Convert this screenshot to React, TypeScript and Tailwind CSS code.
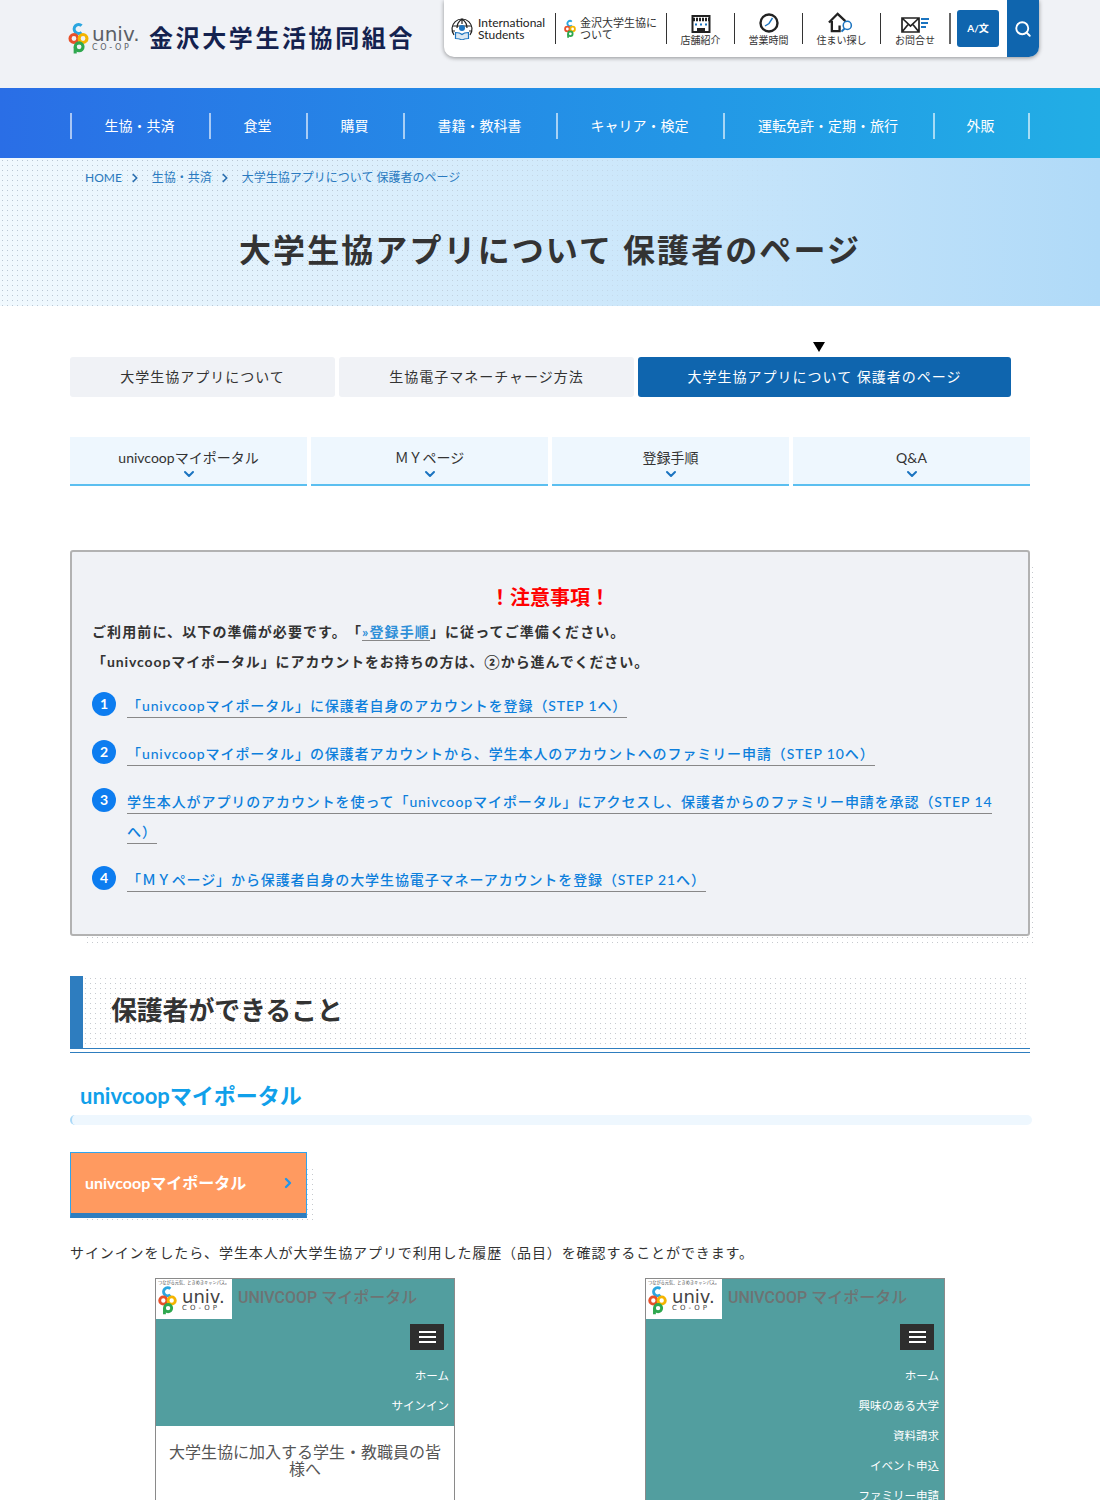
import { ChevronDown, ChevronRight, Search } from 'lucide-react';

const NAV = [
  { label: '生協・共済', w: 'w-[139px]' },
  { label: '食堂', w: 'w-[97px]' },
  { label: '購買', w: 'w-[97px]' },
  { label: '書籍・教科書', w: 'w-[153px]' },
  { label: 'キャリア・検定', w: 'w-[167px]' },
  { label: '運転免許・定期・旅行', w: 'w-[210px]' },
  { label: '外販', w: 'w-[97px]' },
];

const SUB_TABS = ['univcoopマイポータル', 'ＭＹページ', '登録手順', 'Q&A'];

const STEPS = [
  '「univcoopマイポータル」に保護者自身のアカウントを登録（STEP 1へ）',
  '「univcoopマイポータル」の保護者アカウントから、学生本人のアカウントへのファミリー申請（STEP 10へ）',
  '学生本人がアプリのアカウントを使って「univcoopマイポータル」にアクセスし、保護者からのファミリー申請を承認（STEP 14へ）',
  '「ＭＹページ」から保護者自身の大学生協電子マネーアカウントを登録（STEP 21へ）',
];

const DOTS = 'bg-[radial-gradient(#c6cacf_0.7px,transparent_0.9px)] bg-[length:5px_5px]';

function CoopMark({ className }: { className: string }) {
  return (
    <svg viewBox="0 0 20 30" fill="none" strokeWidth="3" className={className}>
      <path d="M13 2.6A4.3 4.3 0 1 0 13 9" stroke="#2aa6e0" />
      <circle cx="5.6" cy="15" r="3.8" stroke="#e8502a" />
      <circle cx="14.4" cy="15" r="3.8" stroke="#f4b400" />
      <circle cx="10.6" cy="23" r="3.8" stroke="#2fa84f" />
      <path d="M6.8 23v6.5" stroke="#2fa84f" />
    </svg>
  );
}

function Divider() {
  return <span className="h-[31px] w-px bg-[#333] shrink-0" />;
}

function UtilItem({ icon, label, w }: { icon: React.ReactNode; label: string; w: string }) {
  return (
    <div className={`${w} pb-[2px] flex flex-col items-center text-[10px] leading-none text-[#333]`}>
      <div className="h-[22px] flex items-end justify-center">{icon}</div>
      <span className="mt-[2px] whitespace-nowrap">{label}</span>
    </div>
  );
}

function PhoneShot({ menu, body }: { menu: string[]; body?: boolean }) {
  return (
    <div className="w-[300px] mx-auto h-[222px] border border-b-0 border-[#8a8a8a] overflow-hidden">
      <div className={`bg-[#529e9f] ${body ? 'h-[147px]' : 'h-[240px]'}`}>
        <div className="flex items-start">
          <div className="w-[76px] h-[40px] bg-white shrink-0">
            <p className="text-[4.2px] leading-[5px] pt-[1px] pl-[2px] text-[#444] whitespace-nowrap">つながる元気、ときめきキャンパス。</p>
            <div className="flex items-center pl-[2px]">
              <CoopMark className="w-[19px] h-[31px]" />
              <div className="ml-[5px] text-[#444] font-['DejaVu_Sans',sans-serif]">
                <p className="text-[18px] leading-[15px]">univ.</p>
                <p className="text-[7px] tracking-[3px] leading-[9px]">CO-OP</p>
              </div>
            </div>
          </div>
          <p className="ml-[6px] mt-[9px] text-[16px] leading-[20px] font-medium text-[#6e7373] whitespace-nowrap font-['Roboto','Noto_Sans_CJK_JP',sans-serif]">UNIVCOOP マイポータル</p>
        </div>
        <div className="flex justify-end pr-[10px] mt-[5px]">
          <div className="w-[34px] h-[26px] bg-[#2e2e2e] flex flex-col justify-center items-center gap-[3px]">
            <span className="w-[17px] h-[2px] bg-white" />
            <span className="w-[17px] h-[2px] bg-white" />
            <span className="w-[17px] h-[2px] bg-white" />
          </div>
        </div>
        <div className="mt-[11px] pr-[5px] text-right text-[11.5px] leading-[30px] text-white">
          {menu.map(m => <p key={m}>{m}</p>)}
        </div>
      </div>
      {body && (
        <p className="bg-white px-[10px] pt-[17px] text-center text-[16px] leading-[17px] text-[#555]">大学生協に加入する学生・教職員の皆様へ</p>
      )}
    </div>
  );
}

export default function App() {
  return (
    <div className="w-[1100px] h-[1500px] overflow-hidden bg-white text-[#333] [text-spacing-trim:space-all] font-['Lato','Noto_Sans_CJK_JP',sans-serif]">
      {/* Header */}
      <header className="h-[88px] bg-[#f0f2f6] flex items-start pl-[68px]">
        <div className="flex items-center mt-[23px]">
          <CoopMark className="w-[21px] h-[31px]" />
          <div className="ml-[3px] w-[50px] text-[#5b5f66] font-['DejaVu_Sans',sans-serif]">
            <p className="text-[20px] leading-[17px]">univ.</p>
            <p className="text-[8px] leading-[9px] tracking-[2.6px]">CO-OP</p>
          </div>
          <h1 className="ml-[7px] -mt-[2px] text-[24px] leading-[30px] font-bold tracking-[2.6px] text-[#14224f] whitespace-nowrap">金沢大学生活協同組合</h1>
        </div>
        {/* Utility panel */}
        <div className="ml-[29px] w-[595px] h-[57px] bg-white rounded-b-[10px] shadow-[0_1px_4px_rgba(0,0,0,0.4)] flex items-center pl-[7px] overflow-hidden">
          <svg viewBox="0 0 22 22" className="w-[22px] h-[22px] shrink-0" fill="none" stroke="#222" strokeWidth="1.2">
            <path d="M3 17A10 10 0 1 1 19 17" />
            <path d="M1.5 8h19M1 13h3M18 13h3M11 1c-3 2-5 5-5 9M11 1c3 2 5 5 5 9M11 1v5" />
            <circle cx="11" cy="10" r="3" fill="#1b74c0" stroke="none" />
            <path d="M4.500 14.500c2 0 5 .5 6.500 2 1.500-1.500 4.500-2 6.500-2v6c-2 0-5 .5-6.500 1.500-1.500-1-4.500-1.500-6.500-1.500z" fill="#dbe8f3" stroke="#1b74c0" />
          </svg>
          <p className="ml-[5px] w-[77px] text-[12px] leading-[12px] text-[#222] shrink-0">International Students</p>
          <Divider />
          <CoopMark className="ml-[8px] w-[12px] h-[20px] shrink-0" />
          <p className="ml-[4px] w-[86px] text-[11px] leading-[12px] text-[#333] shrink-0">金沢大学生協について</p>
          <Divider />
          <UtilItem w="w-[67px]" label="店舗紹介" icon={
            <svg viewBox="0 0 20 18" className="w-[20px] h-[18px]" fill="none" stroke="#222" strokeWidth="2">
              <path d="M1.500 1h17v16h-17z" />
              <path d="M2 4.500h16" strokeWidth="3.500" strokeDasharray="2 1" />
              <path d="M4 8.500h2v2H4zM9 8.500h2v2H9zM14 8.500h2v2h-2z" fill="#1b74c0" strokeWidth="0" />
              <path d="M6 13h8v4H6z" fill="#222" strokeWidth="0" />
            </svg>
          } />
          <Divider />
          <UtilItem w="w-[67px]" label="営業時間" icon={
            <svg viewBox="0 0 20 20" className="w-[20px] h-[20px]" fill="none" stroke="#222" strokeWidth="2.400">
              <circle cx="10" cy="10" r="8.500" />
              <path d="M13.500 5L10 10.500 6 13" stroke="#1b74c0" strokeWidth="1.400" />
            </svg>
          } />
          <Divider />
          <UtilItem w="w-[77px]" label="住まい探し" icon={
            <svg viewBox="0 0 28 22" className="w-[27px] h-[22px]" fill="none" stroke="#222" strokeWidth="2.400">
              <path d="M1 11.500L10 2.500l8 7.500M4 10v10.500h8v-6" />
              <circle cx="20" cy="14.500" r="4.200" stroke="#1b74c0" strokeWidth="1.600" fill="#fff" />
              <path d="M17 18L14 21" stroke="#1b74c0" strokeWidth="2" />
            </svg>
          } />
          <Divider />
          <UtilItem w="w-[68px]" label="お問合せ" icon={
            <svg viewBox="0 0 28 16" className="w-[28px] h-[16px]" fill="none" stroke="#222" strokeWidth="1.700">
              <path d="M1 1h17v14H1zM1 1l8.500 8L18 1M1 15l6.500-8M18 15l-6.500-8" />
              <path d="M20 2h8M20 6h7M20 10h5" stroke="#1b74c0" strokeWidth="1.800" />
            </svg>
          } />
          <span className="h-[31px] w-[2px] bg-[#666] shrink-0" />
          <div className="ml-[6px] w-[42px] h-[37px] rounded-[3px] bg-[#0f65ae] text-white text-[10px] font-bold flex items-center justify-center shrink-0">A/文</div>
          <div className="ml-[8px] w-[32px] h-[57px] bg-[#0f65ae] flex items-center justify-center shrink-0">
            <Search className="w-[18px] h-[18px] text-white" strokeWidth={2.5} />
          </div>
        </div>
      </header>

      {/* Global nav */}
      <nav className="h-[70px] bg-gradient-to-r from-[#2a6ee6] to-[#22aee5] pl-[70px] pt-[6px] flex items-center">
        {NAV.map(({ label, w }, i) => (
          <div key={label} className={`${w} h-[26px] pb-[2px] pr-[2px] flex items-center justify-center border-l-2 border-white/60 ${i === NAV.length - 1 ? 'border-r-2' : ''} text-[14px] text-white whitespace-nowrap`}>
            {label}
          </div>
        ))}
      </nav>

      {/* Hero */}
      <section className="relative h-[148px] bg-gradient-to-r from-[#f1f9fe] to-[#b0daf8] overflow-hidden">
        <div className="absolute inset-0 bg-[radial-gradient(#b9c7d4_0.7px,transparent_0.9px)] bg-[length:5px_5px] [mask-image:linear-gradient(90deg,#000_0%,#000_30%,transparent_75%)]" />
        <div className="relative">
          <div className="pl-[85px] pt-[12px] flex items-center text-[12px] leading-[16px] text-[#2a7ac0]">
            <span>HOME</span>
            <ChevronRight className="w-[14px] h-[14px] ml-[6px] mr-[10px] text-[#2a6fb0]" strokeWidth={3} />
            <span>生協・共済</span>
            <ChevronRight className="w-[14px] h-[14px] ml-[6px] mr-[10px] text-[#2a6fb0]" strokeWidth={3} />
            <span>大学生協アプリについて 保護者のページ</span>
          </div>
          <h2 className="mt-[41px] text-center text-[32px] leading-[46px] font-bold tracking-[2.100px] text-[#333]">大学生協アプリについて 保護者のページ</h2>
        </div>
      </section>

      {/* Tabs */}
      <div className="relative mt-[51px] ml-[70px] flex gap-1 text-[14px] tracking-[1px]">
        <div className="w-[265px] h-[40px] pb-[2px] rounded-[3px] bg-[#f0f2f6] flex items-center justify-center">大学生協アプリについて</div>
        <div className="w-[295px] h-[40px] pb-[2px] rounded-[3px] bg-[#f0f2f6] flex items-center justify-center">生協電子マネーチャージ方法</div>
        <div className="relative w-[373px] h-[40px] pb-[2px] rounded-[3px] bg-[#0f65ae] text-white flex items-center justify-center">
          大学生協アプリについて 保護者のページ
          <span className="absolute left-[175px] -top-[15px] w-0 h-0 border-x-[6px] border-x-transparent border-t-[10px] border-t-black" />
        </div>
      </div>

      {/* Sub tabs */}
      <div className="mt-[40px] mx-[70px] grid grid-cols-4 gap-1">
        {SUB_TABS.map(t => (
          <div key={t} className="h-[49px] bg-[#eef7fe] border-b-2 border-[#5bbff0] flex flex-col items-center pt-[11px] text-[14px] leading-[20px]">
            <span>{t}</span>
            <ChevronDown className="w-[16px] h-[16px] -mt-[2px] text-[#1b74c0]" strokeWidth={3} />
          </div>
        ))}
      </div>

      {/* Notice */}
      <section className="relative mt-[64px] mx-[70px] h-[386px]">
        <div className={`absolute left-[15px] top-[15px] w-[952px] h-[378px] ${DOTS}`} />
        <div className="relative h-full border-2 border-[#b2b2b2] rounded-[3px] bg-[#f0f2f6] px-[20px] pt-[31px] text-[14px] tracking-[0.9px]">
          <p className="text-center text-[20px] leading-[28px] font-bold tracking-[0px] text-[#f00]">！注意事項！</p>
          <p className="mt-[6px] font-bold leading-[30px] tracking-[1.1px] text-[#333]">
            ご利用前に、以下の準備が必要です。「<span className="text-[#2f8fd8] border-b border-[#888]">»登録手順</span>」に従ってご準備ください。
          </p>
          <p className="font-bold leading-[30px] text-[#333]">「univcoopマイポータル」にアカウントをお持ちの方は、②から進んでください。</p>
          <ol className="mt-[14px] flex flex-col gap-[18px]">
            {STEPS.map((s, i) => (
              <li key={s} className="flex items-start">
                <span className="w-[24px] h-[24px] mt-[1px] rounded-full bg-[#0d7df0] text-white text-[14px] leading-[24px] font-bold tracking-normal text-center shrink-0">{i + 1}</span>
                <p className="ml-[11px] leading-[30px] font-medium text-[#0d7fdc]">
                  <span className="pb-[3px] border-b border-[#888]">{s}</span>
                </p>
              </li>
            ))}
          </ol>
        </div>
      </section>

      {/* Section heading */}
      <section className="mt-[40px] mx-[70px]">
        <div className="border-b-[1px] border-[#2e7dbf] pb-[3px]">
          <div className="h-[73px] border-b border-[#2e7dbf] flex">
            <span className="w-[13px] bg-[#2e7dbf] shrink-0" />
            <div className={`flex-1 pl-[28px] pb-[4px] flex items-center ${DOTS}`}>
              <h3 className="text-[26px] leading-[36px] font-bold tracking-[-0.200px] text-[#333]">保護者ができること</h3>
            </div>
          </div>
        </div>
        <h4 className="mt-[27px] pl-[10px] text-[22px] leading-[32px] font-bold text-[#10a0ea]">univcoopマイポータル</h4>
        <div className="mt-[3px] -mr-[2px] h-[10px] rounded-full bg-[#eef7fe] border-l-2 border-[#a9d8f7]" />
        <div className="relative mt-[27px] w-[237px] h-[66px]">
          <div className={`absolute left-[15px] top-[15px] w-[232px] h-[56px] ${DOTS}`} />
          <div className="relative h-full bg-[#ff9a60] border border-[#2fa4ee] border-b-[5px] border-b-[#2e7dbf] pl-[14px] pr-[10px] flex items-center justify-between">
            <span className="text-[16px] font-bold text-white">univcoopマイポータル</span>
            <ChevronRight className="w-[16px] h-[16px] text-[#2296ea]" strokeWidth={3.5} />
          </div>
        </div>
        <p className="mt-[25px] text-[14px] leading-[20px] tracking-[0.9px] text-[#333]">サインインをしたら、学生本人が大学生協アプリで利用した履歴（品目）を確認することができます。</p>
        <div className="mt-[15px] grid grid-cols-2 gap-5">
          <PhoneShot body menu={['ホーム', 'サインイン']} />
          <PhoneShot menu={['ホーム', '興味のある大学', '資料請求', 'イベント申込', 'ファミリー申請']} />
        </div>
      </section>
    </div>
  );
}
